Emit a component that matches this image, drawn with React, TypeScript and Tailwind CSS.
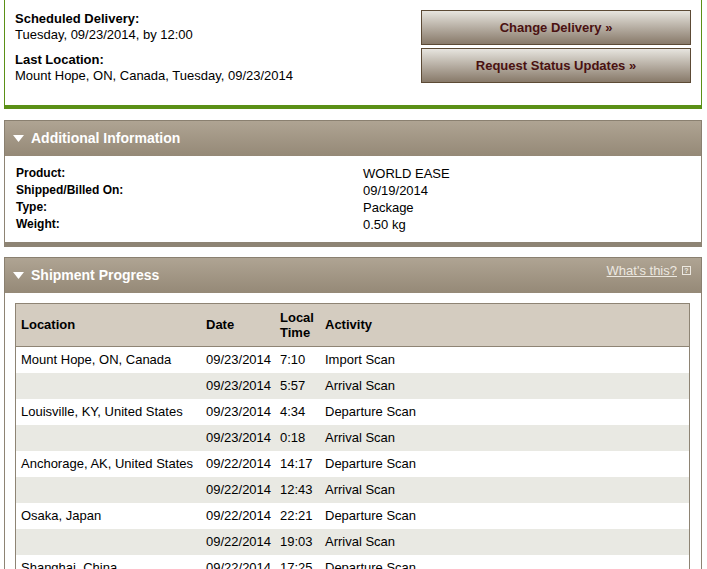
import React from 'react';

const rows = [
  { loc: 'Mount Hope, ON, Canada', date: '09/23/2014', time: '7:10', act: 'Import Scan' },
  { loc: '', date: '09/23/2014', time: '5:57', act: 'Arrival Scan' },
  { loc: 'Louisville, KY, United States', date: '09/23/2014', time: '4:34', act: 'Departure Scan' },
  { loc: '', date: '09/23/2014', time: '0:18', act: 'Arrival Scan' },
  { loc: 'Anchorage, AK, United States', date: '09/22/2014', time: '14:17', act: 'Departure Scan' },
  { loc: '', date: '09/22/2014', time: '12:43', act: 'Arrival Scan' },
  { loc: 'Osaka, Japan', date: '09/22/2014', time: '22:21', act: 'Departure Scan' },
  { loc: '', date: '09/22/2014', time: '19:03', act: 'Arrival Scan' },
  { loc: 'Shanghai, China', date: '09/22/2014', time: '17:25', act: 'Departure Scan' },
  { loc: '', date: '09/22/2014', time: '15:02', act: 'Arrival Scan' },
];

function Caret() {
  return (
    <svg width="11" height="7" viewBox="0 0 11 7" className="shrink-0">
      <polygon points="0,0 11,0 5.5,7" fill="#ffffff" />
    </svg>
  );
}

function SectionHeader({ title, right }: { title: string; right?: React.ReactNode }) {
  return (
    <div className="h-[36px] flex items-center justify-between pl-[8px] pr-[10px] border border-b-0 border-[#8a8070] bg-gradient-to-b from-[#afa493] to-[#958977]">
      <div className="flex items-center gap-[7px]">
        <Caret />
        <span className="text-[14px] font-bold text-white">{title}</span>
      </div>
      {right}
    </div>
  );
}

function ActionButton({ label }: { label: string }) {
  return (
    <button className="w-[270px] h-[35px] border border-[#5c4a35] bg-gradient-to-b from-[#e7e5df] to-[#887a6a] text-[13px] font-bold text-[#4a1111]">
      {label}
    </button>
  );
}

export default function App() {
  const info = [
    ['Product:', 'WORLD EASE'],
    ['Shipped/Billed On:', '09/19/2014'],
    ['Type:', 'Package'],
    ['Weight:', '0.50 kg'],
  ];

  return (
    <div className="w-[707px] h-[569px] overflow-hidden bg-white font-['Liberation_Sans',Arial,sans-serif] text-[13px] text-black">
      {/* Delivery summary */}
      <div className="ml-[4px] w-[698px] border-x border-b-[4px] border-[#5b9016] flex justify-between pl-[10px] pr-[10px] pt-[10px] pb-[21px]">
        <div className="leading-[16px] pt-[1px]">
          <div className="font-bold">Scheduled Delivery:</div>
          <div>Tuesday, 09/23/2014, by 12:00</div>
          <div className="font-bold mt-[9px]">Last Location:</div>
          <div>Mount Hope, ON, Canada, Tuesday, 09/23/2014</div>
        </div>
        <div className="flex flex-col gap-[3px]">
          <ActionButton label="Change Delivery »" />
          <ActionButton label="Request Status Updates »" />
        </div>
      </div>

      {/* Additional Information */}
      <div className="ml-[4px] w-[698px] mt-[11px]">
        <SectionHeader title="Additional Information" />
        <div className="border-x border-b-[5px] border-[#8e8474] pl-[11px] pt-[9px] pb-[9px] leading-[17px]">
          {info.map(([k, v]) => (
            <div key={k} className="flex items-center">
              <div className="w-[347px] font-bold text-[12px]">{k}</div>
              <div>{v}</div>
            </div>
          ))}
        </div>
      </div>

      {/* Shipment Progress */}
      <div className="ml-[4px] w-[698px] mt-[10px]">
        <SectionHeader
          title="Shipment Progress"
          right={
            <div className="flex items-center gap-[5px] text-[13px] text-[#ece8e0] mt-[-10px]">
              <span className="underline">What's this?</span>
              <span className="w-[9px] h-[9px] border border-[#ece8e0] text-[7px] leading-[7px] font-bold flex items-center justify-center">?</span>
            </div>
          }
        />
        <div className="border-x border-[#8e8474] pl-[10px] pr-[11px] pt-[10px]">
          <div className="border border-[#8e8474]">
            <div className="grid grid-cols-[185px_74px_45px_1fr] h-[43px] items-center bg-[#d4ccc0] border-b border-[#8e8474] font-bold text-[13px]">
              <div className="pl-[5px]">Location</div>
              <div className="pl-[5px]">Date</div>
              <div className="pl-[5px] leading-[15px]">
                Local
                <br />
                Time
              </div>
              <div className="pl-[5px]">Activity</div>
            </div>
            {rows.map((r, i) => (
              <div
                key={i}
                className={`grid grid-cols-[185px_74px_45px_1fr] h-[26px] items-center ${i % 2 === 1 ? 'bg-[#e9e9e3]' : 'bg-white'}`}
              >
                <div className="pl-[5px] whitespace-nowrap">{r.loc}</div>
                <div className="pl-[5px]">{r.date}</div>
                <div className="pl-[5px]">{r.time}</div>
                <div className="pl-[5px]">{r.act}</div>
              </div>
            ))}
          </div>
        </div>
      </div>
    </div>
  );
}
